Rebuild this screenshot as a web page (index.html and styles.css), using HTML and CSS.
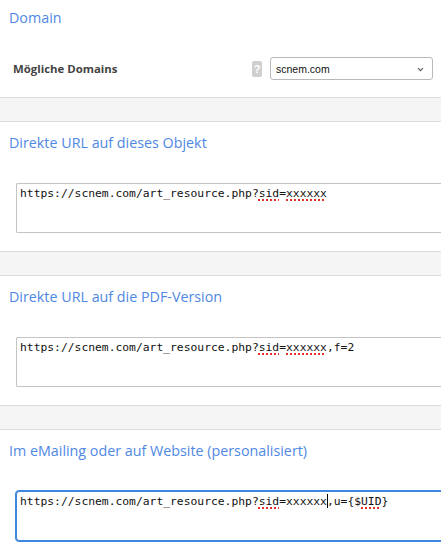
FILE: index.html
```html
<!DOCTYPE html>
<html lang="de">
  <head>
    <meta charset="UTF-8" />
    <meta name="viewport" content="width=device-width, initial-scale=1.0" />
    <title>Objekt-Links</title>
    <link rel="stylesheet" href="styles.css">
  </head>
  <body>
    <div class="panel panel-first">
      <h2 class="panel-title">Domain</h2>
      <div class="field-row">
        <span class="field-label">Mögliche Domains</span>
        <span class="help">?</span>
        <div class="select">
          <span class="select-value">scnem.com</span>
          <svg class="select-arrow" width="7" height="5" viewBox="0 0 7 5">
            <path d="M1 1.2 L3.5 3.7 L6 1.2" fill="none" stroke="#555" stroke-width="1.1" />
          </svg>
        </div>
      </div>
    </div>
    <div class="band"></div>

    <div class="panel">
      <h2 class="panel-title">Direkte URL auf dieses Objekt</h2>
      <div class="url-box">https://scnem.com/art_resource.php?<span class="typo">sid</span>=<span class="typo">xxxxxx</span></div>
    </div>
    <div class="band"></div>

    <div class="panel">
      <h2 class="panel-title">Direkte URL auf die PDF-Version</h2>
      <div class="url-box">https://scnem.com/art_resource.php?<span class="typo">sid</span>=<span class="typo">xxxxxx</span>,f=2</div>
    </div>
    <div class="band"></div>

    <div class="panel">
      <h2 class="panel-title">Im eMailing oder auf Website (personalisiert)</h2>
      <div class="url-box url-box-focus">https://scnem.com/art_resource.php?<span class="typo">sid</span>=xxxxxx<span class="caret"></span>,u={$<span class="typo">UID</span>}</div>
    </div>
  </body>
</html>
```

FILE: styles.css
```css
html,
body {
  margin: 0;
  overflow: hidden;
}
body {
  background: #fff;
  font-family: "Open Sans", sans-serif;
  width: 441px;
}
.panel {
  padding: 11px 0 18px;
  border-bottom: 1px solid #dcdcdc;
}
.panel-first {
  padding: 8px 0 17px;
}
.panel-title {
  margin: 0 0 30px 9px;
  font-size: 14.3px;
  line-height: 20px;
  font-weight: 400;
  color: #4f88e3;
}
.panel-first .panel-title {
  margin-bottom: 29px;
}
.band {
  height: 23px;
  background: #f5f5f5;
  border-bottom: 1px solid #dcdcdc;
}
.field-row {
  display: flex;
  align-items: center;
  padding: 0 8px 0 13px;
}
.field-label {
  flex: 1;
  font-size: 11.4px;
  font-weight: 700;
  color: #444;
}
.help {
  width: 10px;
  height: 16px;
  margin-right: 8px;
  border-radius: 2px;
  background: #cfcfcf;
  color: #fff;
  font-family: "Liberation Sans", sans-serif;
  font-size: 11px;
  font-weight: 700;
  line-height: 16px;
  text-align: center;
}
.select {
  display: flex;
  align-items: center;
  justify-content: space-between;
  box-sizing: border-box;
  width: 163px;
  height: 23px;
  padding: 0 8px 0 5px;
  border: 1px solid #b9b9b9;
  border-radius: 3px;
  background: #fff;
}
.select-value {
  font-family: "Liberation Sans", sans-serif;
  font-size: 10.5px;
  color: #111;
}
.select-arrow {
  margin-top: 2px;
}
.url-box {
  box-sizing: border-box;
  height: 50px;
  margin-left: 16px;
  padding: 2px 3px;
  border: 1px solid #c4c4c4;
  border-right: 0;
  border-radius: 2px 0 0 2px;
  font-family: "DejaVu Sans Mono", monospace;
  font-size: 11.33px;
  line-height: 14px;
  color: #111;
  white-space: pre;
  overflow: hidden;
}
.url-box-focus {
  border-color: #3f86e0;
  border-radius: 3px 0 0 3px;
  box-shadow: -1px 0 0 0 #3f86e0, 0 -1px 0 0 #3f86e0, 0 1px 0 0 #3f86e0;
}
.typo {
  text-decoration: underline dotted #e0312b;
  text-decoration-thickness: 2px;
  text-underline-offset: 2px;
}
.caret {
  display: inline-block;
  width: 1px;
  height: 14px;
  margin-right: -1px;
  background: #000;
  vertical-align: -3px;
}
```
